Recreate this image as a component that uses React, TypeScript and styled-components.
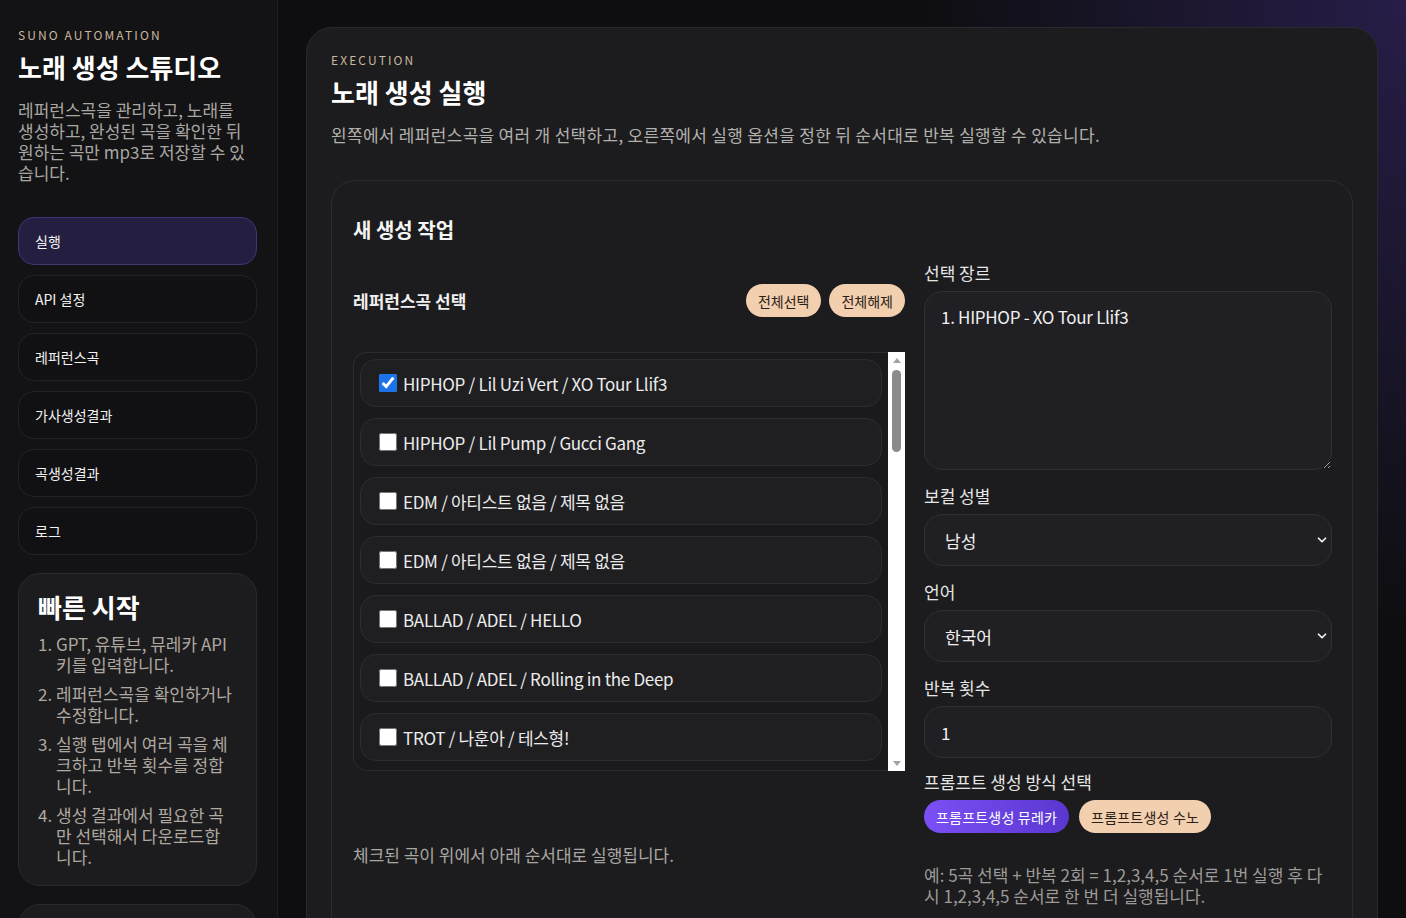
import { useEffect, useRef, useState } from 'react';
import styled, { createGlobalStyle } from 'styled-components';
import { ChevronDown } from 'lucide-react';

const GlobalStyle = createGlobalStyle`
  html, body {
    margin: 0;
    padding: 0;
    background: #0e0e10;
  }
  body {
    font-family: "Noto Sans CJK KR", "Noto Sans", sans-serif;
    color: #ececec;
  }
  * {
    box-sizing: border-box;
  }
`;

const genres = ['HIPHOP', 'EDM', 'BALLAD', 'TROT', 'ROCK', 'R&B', 'POP', 'JAZZ'];

const baseSongs = [
  { genre: 'HIPHOP', artist: 'Lil Uzi Vert', title: 'XO Tour Llif3' },
  { genre: 'HIPHOP', artist: 'Lil Pump', title: 'Gucci Gang' },
  { genre: 'EDM', artist: '아티스트 없음', title: '제목 없음' },
  { genre: 'EDM', artist: '아티스트 없음', title: '제목 없음' },
  { genre: 'BALLAD', artist: 'ADEL', title: 'HELLO' },
  { genre: 'BALLAD', artist: 'ADEL', title: 'Rolling in the Deep' },
  { genre: 'TROT', artist: '나훈아', title: '테스형!' },
];

// 스크롤바 길이를 맞추려고 나머지 곡은 대충 채워둠
const songs = [
  ...baseSongs,
  ...Array.from({ length: 26 }, (_, i) => ({
    genre: genres[i % genres.length],
    artist: '아티스트 없음',
    title: '제목 없음',
  })),
].map((s, i) => ({ ...s, id: i + 1 }));

const navItems = ['실행', 'API 설정', '레퍼런스곡', '가사생성결과', '곡생성결과', '로그'];

const steps = [
  'GPT, 유튜브, 뮤레카 API 키를 입력합니다.',
  '레퍼런스곡을 확인하거나 수정합니다.',
  '실행 탭에서 여러 곡을 체크하고 반복 횟수를 정합니다.',
  '생성 결과에서 필요한 곡만 선택해서 다운로드합니다.',
];

const ARROW = 16;

export default function App() {
  const [checked, setChecked] = useState<number[]>([1]);
  const [mode, setMode] = useState<'mureka' | 'suno'>('mureka');
  const [thumb, setThumb] = useState({ top: 2, height: 84 });
  const scrollRef = useRef<HTMLDivElement>(null);

  const updateThumb = () => {
    const el = scrollRef.current;
    if (!el) return;
    const track = el.clientHeight - ARROW * 2;
    const height = Math.max(30, (el.clientHeight / el.scrollHeight) * track);
    const max = el.scrollHeight - el.clientHeight;
    const top = max > 0 ? (el.scrollTop / max) * (track - height - 4) + 2 : 2;
    setThumb({ top, height });
  };

  useEffect(() => {
    updateThumb();
  }, []);

  const toggle = (id: number) => {
    setChecked(prev => (prev.includes(id) ? prev.filter(v => v !== id) : [...prev, id]));
  };

  const selectedText = songs
    .filter(s => checked.includes(s.id))
    .map((s, i) => `${i + 1}. ${s.genre} - ${s.title}`)
    .join('\n');

  return (
    <>
      <GlobalStyle />
      <Layout>
        <Sidebar>
          <Eyebrow>SUNO AUTOMATION</Eyebrow>
          <BrandTitle>노래 생성 스튜디오</BrandTitle>
          <BrandDesc>
            레퍼런스곡을 관리하고, 노래를 생성하고, 완성된 곡을 확인한 뒤 원하는 곡만 mp3로 저장할 수
            있습니다.
          </BrandDesc>

          <Nav>
            {navItems.map((item, i) => (
              <NavButton key={item} $active={i === 0}>
                {item}
              </NavButton>
            ))}
          </Nav>

          <SideCard>
            <SideCardTitle>빠른 시작</SideCardTitle>
            <StepList>
              {steps.map(step => (
                <li key={step}>{step}</li>
              ))}
            </StepList>
          </SideCard>
          <SideCard />
        </Sidebar>

        <Main>
          <Panel>
            <Eyebrow>EXECUTION</Eyebrow>
            <PageTitle>노래 생성 실행</PageTitle>
            <PageDesc>
              왼쪽에서 레퍼런스곡을 여러 개 선택하고, 오른쪽에서 실행 옵션을 정한 뒤 순서대로 반복
              실행할 수 있습니다.
            </PageDesc>

            <JobCard>
              <JobTitle>새 생성 작업</JobTitle>
              <JobGrid>
                <LeftCol>
                  <ListHeader>
                    <SectionLabel>레퍼런스곡 선택</SectionLabel>
                    <ButtonRow>
                      <PillButton onClick={() => setChecked(songs.map(s => s.id))}>전체선택</PillButton>
                      <PillButton onClick={() => setChecked([])}>전체해제</PillButton>
                    </ButtonRow>
                  </ListHeader>

                  <ListFrame>
                    <SongScroll ref={scrollRef} onScroll={updateThumb}>
                      {songs.map(song => (
                        <SongItem key={song.id}>
                          <Check
                            type="checkbox"
                            checked={checked.includes(song.id)}
                            onChange={() => toggle(song.id)}
                          />
                          {song.genre} / {song.artist} / {song.title}
                        </SongItem>
                      ))}
                    </SongScroll>
                    <Rail>
                      <RailArrow $dir="up" />
                      <RailTrack>
                        <RailThumb style={{ top: thumb.top, height: thumb.height }} />
                      </RailTrack>
                      <RailArrow $dir="down" />
                    </Rail>
                  </ListFrame>

                  <Hint>체크된 곡이 위에서 아래 순서대로 실행됩니다.</Hint>
                </LeftCol>

                <RightCol>
                  <Field>
                    <FieldLabel>선택 장르</FieldLabel>
                    <TextArea value={selectedText} readOnly />
                  </Field>

                  <Field>
                    <FieldLabel>보컬 성별</FieldLabel>
                    <SelectWrap>
                      <Select defaultValue="male">
                        <option value="male">남성</option>
                        <option value="female">여성</option>
                      </Select>
                      <ChevronDown size={14} strokeWidth={3} />
                    </SelectWrap>
                  </Field>

                  <Field>
                    <FieldLabel>언어</FieldLabel>
                    <SelectWrap>
                      <Select defaultValue="ko">
                        <option value="ko">한국어</option>
                        <option value="en">영어</option>
                      </Select>
                      <ChevronDown size={14} strokeWidth={3} />
                    </SelectWrap>
                  </Field>

                  <Field>
                    <FieldLabel>반복 횟수</FieldLabel>
                    <Input type="number" defaultValue={1} min={1} />
                  </Field>

                  <Field $tight>
                    <FieldLabel>프롬프트 생성 방식 선택</FieldLabel>
                    <ButtonRow $gap={10}>
                      <ModeButton $active={mode === 'mureka'} onClick={() => setMode('mureka')}>
                        프롬프트생성 뮤레카
                      </ModeButton>
                      <ModeButton $active={mode === 'suno'} onClick={() => setMode('suno')}>
                        프롬프트생성 수노
                      </ModeButton>
                    </ButtonRow>
                  </Field>

                  <Example>
                    예: 5곡 선택 + 반복 2회 = 1,2,3,4,5 순서로 1번 실행 후 다시 1,2,3,4,5 순서로 한 번 더
                    실행됩니다.
                  </Example>
                </RightCol>
              </JobGrid>
            </JobCard>
          </Panel>
        </Main>
      </Layout>
    </>
  );
}

const Layout = styled.div`
  display: flex;
  height: 100vh;
  overflow: hidden;
  background:
    radial-gradient(ellipse 700px 900px at 100% 0%, rgba(70, 48, 140, 0.45), transparent 70%),
    #0e0e10;
`;

const Sidebar = styled.aside`
  width: 278px;
  flex-shrink: 0;
  padding: 27px 20px 0 18px;
  background: #131315;
  border-right: 1px solid #1f1f23;
  overflow: hidden;
`;

const Eyebrow = styled.div`
  font-size: 12px;
  line-height: 16px;
  letter-spacing: 2.1px;
  color: #c9b79f;
`;

const BrandTitle = styled.h1`
  margin: 8px 0 0;
  font-size: 26px;
  line-height: 32px;
  font-weight: 700;
  color: #ffffff;
`;

const BrandDesc = styled.p`
  margin: 16px 0 0;
  max-width: 233px;
  font-size: 17px;
  line-height: 21px;
  color: #aaa7a2;
`;

const Nav = styled.nav`
  display: flex;
  flex-direction: column;
  gap: 10px;
  margin-top: 34px;
`;

const NavButton = styled.button<{ $active?: boolean }>`
  height: 48px;
  padding: 0 16px;
  text-align: left;
  font-family: inherit;
  font-size: 14px;
  color: #f2f2f2;
  border-radius: 16px;
  border: 1px solid ${p => (p.$active ? '#3f3678' : '#232327')};
  background: ${p => (p.$active ? '#241e40' : '#111113')};
  cursor: pointer;
`;

const SideCard = styled.section`
  margin-top: 18px;
  padding: 18px 22px 18px 19px;
  min-height: 60px;
  border-radius: 22px;
  background: #1c1c1f;
  border: 1px solid #2a2a2e;
`;

const SideCardTitle = styled.h2`
  margin: 0;
  font-size: 26px;
  line-height: 30px;
  font-weight: 700;
  color: #ffffff;
`;

const StepList = styled.ol`
  margin: 11px 0 0;
  padding-left: 18px;
  font-size: 17px;
  line-height: 21px;
  color: #aea89f;

  li + li {
    margin-top: 8px;
  }
`;

const Main = styled.main`
  flex: 1;
  min-width: 0;
  padding: 27px 28px 0;
  overflow: hidden;
`;

const Panel = styled.section`
  padding: 24px 24px 40px;
  border-radius: 26px;
  background: #1c1c1e;
  border: 1px solid #2a2a2e;
`;

const PageTitle = styled.h1`
  margin: 8px 0 0;
  font-size: 26px;
  line-height: 32px;
  font-weight: 700;
  color: #ffffff;
`;

const PageDesc = styled.p`
  margin: 16px 0 0;
  font-size: 17px;
  line-height: 21px;
  letter-spacing: 0.3px;
  color: #b3b1ad;
`;

const JobCard = styled.section`
  margin-top: 35px;
  padding: 36px 20px 40px 21px;
  border-radius: 24px;
  background: #1c1c1e;
  border: 1px solid #2c2c30;
`;

const JobTitle = styled.h2`
  margin: 0;
  font-size: 20px;
  line-height: 26px;
  font-weight: 700;
  color: #f5f5f5;
`;

const JobGrid = styled.div`
  display: grid;
  grid-template-columns: minmax(0, 1fr) 408px;
  gap: 19px;
  margin-top: 20px;
`;

const LeftCol = styled.div`
  display: flex;
  flex-direction: column;
  padding-top: 21px;
`;

const ListHeader = styled.div`
  display: flex;
  align-items: center;
  justify-content: space-between;
`;

const SectionLabel = styled.h3`
  margin: 0;
  font-size: 17px;
  font-weight: 700;
  color: #f0f0f0;
`;

const ButtonRow = styled.div<{ $gap?: number }>`
  display: flex;
  gap: ${p => p.$gap ?? 8}px;
`;

const PillButton = styled.button`
  height: 33px;
  padding: 0 12px;
  border: none;
  border-radius: 17px;
  background: #f2cfae;
  color: #2a2018;
  font-family: inherit;
  font-size: 14px;
  cursor: pointer;
`;

const ListFrame = styled.div`
  margin-top: 35px;
  height: 419px;
  display: flex;
  border: 1px solid #2c2c30;
  border-right: none;
  border-radius: 14px 0 0 14px;
  background: #1a1a1c;
`;

const SongScroll = styled.div`
  flex: 1;
  min-width: 0;
  padding: 6px;
  display: flex;
  flex-direction: column;
  gap: 11px;
  overflow-y: auto;
  scrollbar-width: none;

  &::-webkit-scrollbar {
    display: none;
  }
`;

const Rail = styled.div`
  width: 17px;
  margin: -1px 0;
  flex-shrink: 0;
  display: flex;
  flex-direction: column;
  background: #ffffff;
`;

const RailArrow = styled.div<{ $dir: 'up' | 'down' }>`
  height: ${ARROW}px;
  flex-shrink: 0;
  display: flex;
  align-items: center;
  justify-content: center;

  &::before {
    content: '';
    width: 0;
    height: 0;
    border-left: 4px solid transparent;
    border-right: 4px solid transparent;
    ${p => (p.$dir === 'up' ? 'border-bottom: 5px solid #a3a3a3;' : 'border-top: 5px solid #a3a3a3;')}
  }
`;

const RailTrack = styled.div`
  position: relative;
  flex: 1;
`;

const RailThumb = styled.div`
  position: absolute;
  left: 4px;
  width: 9px;
  border-radius: 5px;
  background: #8b8b8b;
`;

const SongItem = styled.label`
  flex-shrink: 0;
  display: flex;
  align-items: center;
  gap: 6px;
  height: 48px;
  padding: 0 18px;
  border-radius: 16px;
  border: 1px solid #2d2d31;
  background: #1f1f22;
  font-size: 17px;
  letter-spacing: -0.3px;
  color: #ececec;
  cursor: pointer;
`;

const Check = styled.input`
  width: 18px;
  height: 18px;
  margin: 0;
  accent-color: #1a73e8;
`;

const Hint = styled.p`
  margin: 73px 0 0;
  font-size: 17px;
  line-height: 21px;
  color: #a9a7a3;
`;

const RightCol = styled.div`
  display: flex;
  flex-direction: column;
  gap: 16px;
`;

const Field = styled.div<{ $tight?: boolean }>`
  display: flex;
  flex-direction: column;
  gap: 9px;
  margin-top: ${p => (p.$tight ? '-2px' : '0')};
`;

const FieldLabel = styled.label`
  font-size: 17px;
  line-height: 19px;
  color: #e6e6e6;
`;

const fieldBase = `
  width: 100%;
  border-radius: 18px;
  border: 1px solid #2f2f34;
  background: #202024;
  color: #f0f0f0;
  font-family: inherit;
  font-size: 17px;
  outline: none;
`;

const TextArea = styled.textarea`
  ${fieldBase}
  height: 179px;
  padding: 14px 16px;
  line-height: 22px;
  letter-spacing: -0.3px;
  resize: vertical;
`;

const SelectWrap = styled.div`
  position: relative;
  color: #f0f0f0;

  svg {
    position: absolute;
    right: 3px;
    top: 50%;
    transform: translateY(-50%);
    pointer-events: none;
  }
`;

const Select = styled.select`
  ${fieldBase}
  appearance: none;
  height: 52px;
  padding: 0 20px;
`;

const Input = styled.input`
  ${fieldBase}
  height: 52px;
  padding: 0 16px;
  appearance: textfield;

  &::-webkit-inner-spin-button,
  &::-webkit-outer-spin-button {
    -webkit-appearance: none;
    margin: 0;
  }
`;

const ModeButton = styled.button<{ $active?: boolean }>`
  height: 33px;
  padding: 0 12px;
  border: none;
  border-radius: 17px;
  font-family: inherit;
  font-size: 14px;
  letter-spacing: 0.2px;
  cursor: pointer;
  color: ${p => (p.$active ? '#ffffff' : '#2a2018')};
  background: ${p => (p.$active ? 'linear-gradient(90deg, #7b4ff5, #5a37d0)' : '#f2cfae')};
`;

const Example = styled.p`
  margin: 15px 0 0;
  max-width: 404px;
  font-size: 17px;
  line-height: 21px;
  color: #9c9a97;
`;
